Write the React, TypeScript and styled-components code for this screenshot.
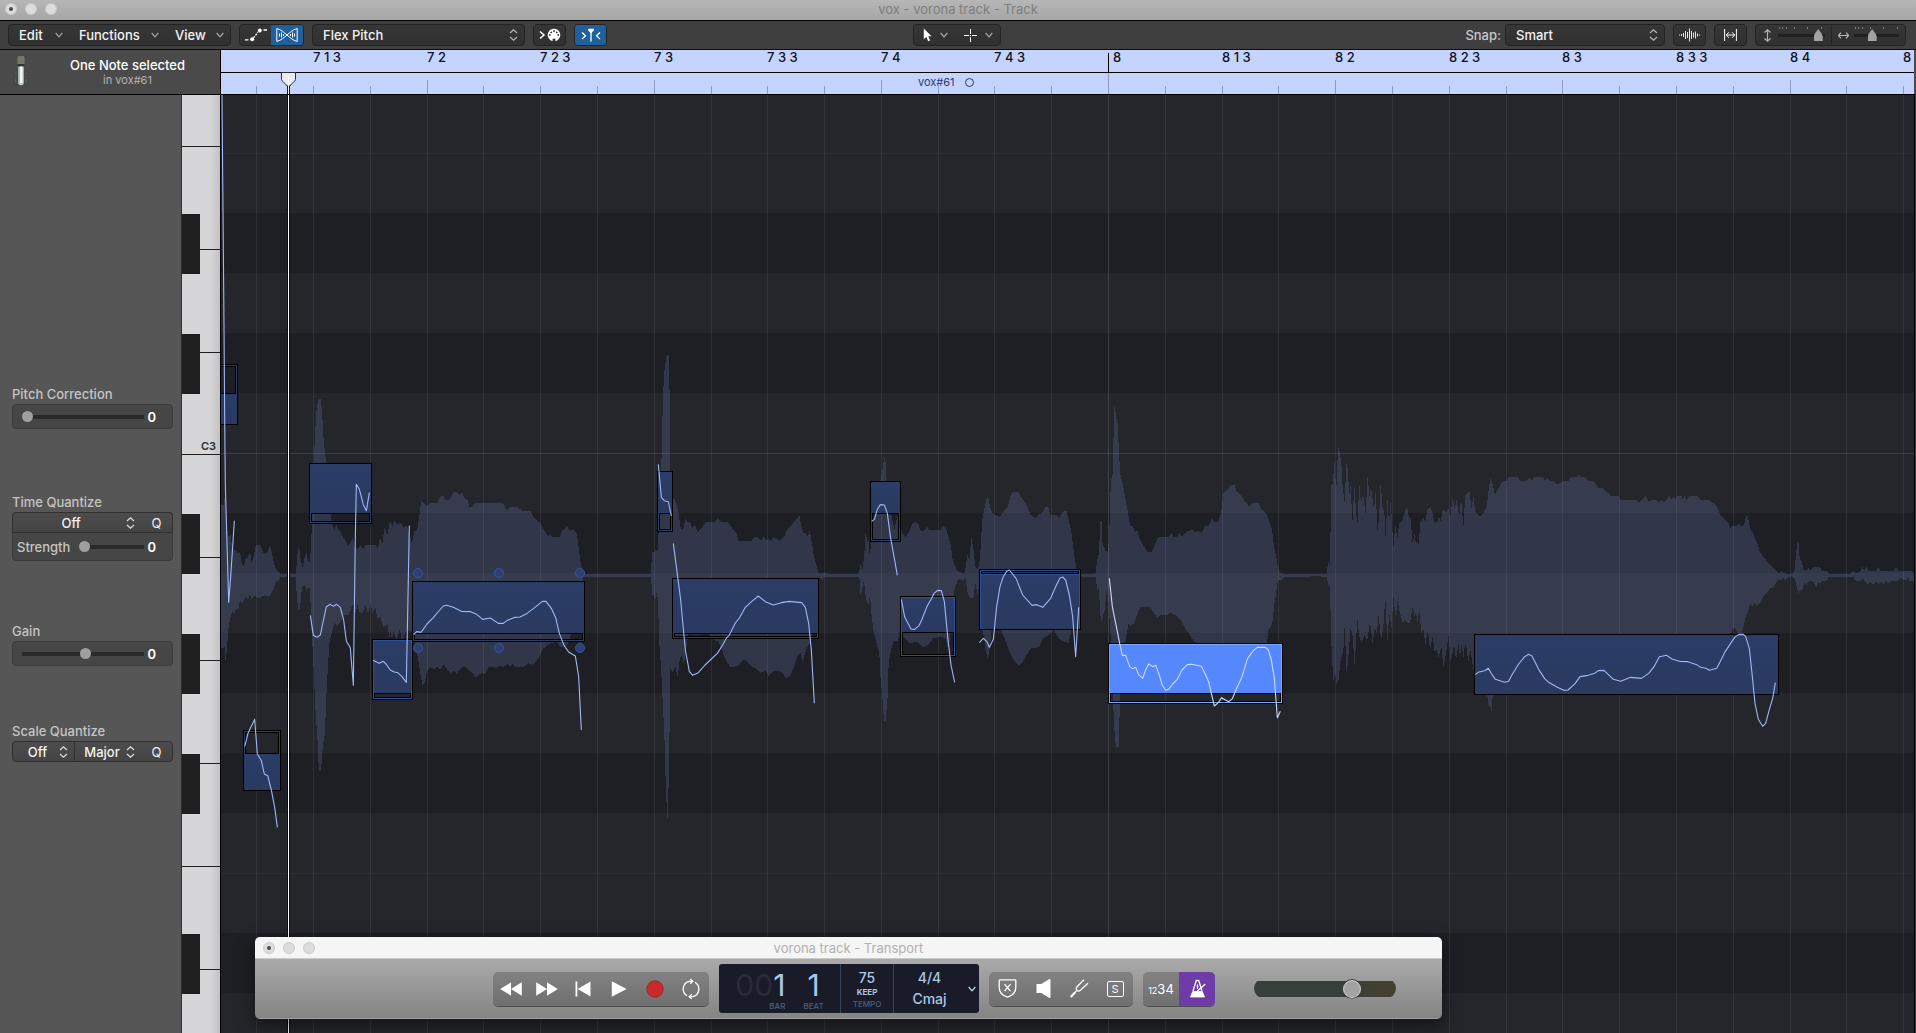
import React from "react";
import styled, { createGlobalStyle, css } from "styled-components";

const GlobalStyle = createGlobalStyle`
  *, *::before, *::after { box-sizing: border-box; }
  html, body { margin: 0; background: #25262b; }
  body { font-family: Inter, "Liberation Sans", sans-serif; font-size: 13px; color: #f2f2f2; }
  button, select, input, output { font: inherit; color: inherit; margin: 0; padding: 0; }
`;

/* ------------------------------------------------------------------ */
/* Timeline data                                                       */
/* ------------------------------------------------------------------ */

/* Horizontal offset of the n-th 1/8 division, from the left of the editor. */
const gridX = (n: number) => Math.round(35.2 + n * 56.79);
const GRID = Array.from({ length: 30 }, (_, n) => gridX(n));

const BEAT_LABELS = ["7 1 3", "7 2", "7 2 3", "7 3", "7 3 3", "7 4", "7 4 3", "8", "8 1 3", "8 2", "8 2 3", "8 3", "8 3 3", "8 4", "8"];

type Lane = { size: number; dark?: boolean; rule?: "strong" | "soft" };
const LANES: Lane[] = [
  { size: 58, rule: "soft" },
  { size: 60 },
  { size: 60, dark: true },
  { size: 60 },
  { size: 60, dark: true },
  { size: 60, rule: "strong" },
  { size: 60 },
  { size: 60, dark: true },
  { size: 60 },
  { size: 60, dark: true },
  { size: 60 },
  { size: 60, dark: true },
  { size: 60, rule: "soft" },
  { size: 60 },
  { size: 60, dark: true },
  { size: 60 },
];

const WHITE_KEYS = [52, 103, 103, 102, 103, 103, 103, 103, 103, 103];
const BLACK_KEYS = [119, 239, 419, 539, 659, 839];

type NoteData = {
  x: number;
  y: number;
  w: number;
  h: number;
  hollow?: number;
  side?: "top" | "bottom";
  edge?: string;
  selected?: boolean;
};
const NOTES: NoteData[] = [
  { x: -20, y: 269, w: 37, h: 61, hollow: 29, side: "top" },
  { x: 22, y: 635, w: 38, h: 61, hollow: 23, side: "top" },
  { x: 88, y: 368, w: 63, h: 61, hollow: 10, side: "bottom" },
  { x: 151, y: 544, w: 41, h: 61, hollow: 6, side: "bottom", edge: "#2c4f9e" },
  { x: 191, y: 486, w: 173, h: 61, hollow: 8, side: "bottom" },
  { x: 436, y: 376, w: 16, h: 61, hollow: 18, side: "bottom" },
  { x: 451, y: 483, w: 147, h: 61, hollow: 5, side: "bottom" },
  { x: 649, y: 386, w: 31, h: 61, hollow: 28, side: "bottom" },
  { x: 679, y: 501, w: 56, h: 61, hollow: 24, side: "bottom", edge: "#2c4f9e" },
  { x: 758, y: 474, w: 102, h: 61, hollow: 4, side: "top", edge: "#2c4f9e" },
  { x: 887, y: 548, w: 175, h: 61, hollow: 10, side: "bottom", selected: true, edge: "#7ba6ff" },
  { x: 1253, y: 539, w: 305, h: 61 },
];

const HANDLES = [
  [197, 478], [278, 478], [359, 478],
  [197, 553], [278, 553], [359, 553],
];

/* Every take is drawn on a grid three times finer than the editor's. */
type Take = { x: number; y: number; wave: string; curves: { d: string; bright?: boolean }[] };
const TAKES: Take[] = [
  {
    x: -1,
    y: 255,
    wave:
      "3,465 12,465 12,445 18,445 18,490 24,560 33,555 36,600 48,600 54,610 60,605 66,645 72,648 78,622 84,625 90,603 95,640 102,615 108,585 120,585 132,612 142,608 148,588 154,600 162,640 170,662 180,672 228,672 232,615 237,585 242,630 248,652 254,622 260,608 264,632 270,636 274,562 277,500 280,400 283,303 288,195 294,150 302,147 306,185 311,270 318,335 324,460 332,495 338,530 344,540 349,525 356,540 362,545 368,560 376,572 385,588 392,575 398,562 404,590 414,598 421,585 430,598 437,585 466,585 473,598 480,562 487,585 493,532 502,556 510,512 518,528 523,512 532,525 541,518 550,532 560,528 566,545 576,580 582,545 592,538 600,480 604,452 614,462 622,470 632,460 650,460 660,440 672,438 676,450 690,448 700,427 712,427 718,437 726,427 734,445 742,448 748,470 758,470 764,460 850,460 860,482 872,472 892,472 908,482 932,484 940,500 952,512 962,520 975,545 985,558 992,552 996,560 1020,560 1026,542 1036,535 1040,528 1048,542 1062,540 1070,550 1076,590 1082,640 1090,672 1200,672 " +
      "1200,681 1090,681 1080,760 1070,830 1055,850 1042,885 1022,892 1010,876 992,880 970,895 958,920 946,938 935,945 925,940 912,950 885,950 878,942 870,950 862,942 850,950 836,948 828,955 820,950 805,952 795,972 785,968 776,975 768,982 758,970 748,962 736,950 728,950 718,960 710,972 702,960 694,972 684,962 672,942 662,958 650,950 642,958 630,950 620,968 614,1000 607,1005 600,965 594,925 585,890 580,850 570,842 558,842 545,880 540,835 530,870 520,845 516,868 510,840 508,868 503,825 490,830 480,800 472,805 466,770 458,790 452,763 444,790 436,762 428,790 418,785 412,762 407,790 400,762 395,770 385,795 370,795 362,815 352,828 343,820 335,850 328,880 322,980 318,1060 315,1150 309,1185 303,1262 297,1265 292,1160 286,1075 282,980 278,900 274,830 270,712 264,715 260,722 254,705 246,712 240,775 235,782 230,735 228,681 182,681 174,695 168,693 160,718 152,735 145,740 134,736 116,745 104,738 94,748 90,730 84,750 78,738 66,762 60,750 55,780 48,775 42,795 38,780 32,800 26,830 22,880 17,938 14,890 10,895 3,895",
    curves: [
      { d: "6,-765 12,-75 14,204 16,405 22,615 26,757 32,680 38,590 43,512" },
      { d: "74,1190 84,1150 104,1108 112,1212 124,1232 133,1272 143,1277 154,1320 164,1372 172,1432" },
      { d: "271,796 280,856 291,862 301,855 319,770 331,763 340,769 350,763 361,772 371,810 379,873 391,894 400,1006 406,560 409,403 418,418 430,464 439,482 448,428" },
      { d: "459,931 478,940 490,934 498,942 511,960 521,965 533,968 546,980 559,997 568,527" },
      { d: "581,854 590,845 603,847 621,822 640,803 654,786 670,768 680,766 700,772 724,784 752,785 770,793 788,808 811,804 835,820 850,820 862,811 885,802 900,801 920,791 945,772 967,754 978,754 994,775 1007,803 1018,850 1032,886 1046,906 1066,918 1076,980 1084,1140" },
    ],
  },
  {
    x: 399,
    y: 245,
    wave:
      "0,702 93,702 96,637 104,635 108,627 112,640 116,575 120,520 123,420 126,290 129,165 133,95 139,50 145,42 148,60 150,400 156,480 163,475 170,495 176,520 182,565 190,567 196,535 202,545 211,548 216,568 220,558 226,558 232,575 242,568 256,547 285,545 293,534 305,545 326,548 340,570 350,580 355,602 395,602 402,592 415,592 422,602 430,592 440,602 446,598 452,602 460,592 472,595 478,602 492,590 502,568 512,558 522,545 530,538 538,525 543,555 550,578 556,578 563,590 569,570 575,605 581,645 588,670 596,700 710,702 717,700 721,670 728,688 734,630 737,572 742,610 745,595 750,655 753,600 760,540 770,500 779,430 786,400 790,370 793,347 797,370 799,440 806,520 815,530 823,568 832,528 840,555 848,580 856,592 866,578 878,550 884,545 893,550 903,575 914,570 922,560 928,570 962,570 970,558 978,565 985,590 992,615 998,660 1006,680 1012,692 1024,698 1034,700 1042,645 1048,660 1054,592 1060,625 1066,680 1074,690 1080,655 1087,535 1092,512 1098,480 1104,468 1110,500 1115,515 1124,525 1140,530 1150,515 1164,498 1172,465 1178,456 1196,456 1206,475 1216,488 1225,508 1232,525 1246,533 1256,525 1270,515 1276,501 1286,503 1290,524 1308,524 1316,533 1322,525 1328,515 1340,513 1346,540 1354,575 1362,640 1370,690 1380,702 " +
      "1380,710 1372,740 1365,830 1355,868 1346,910 1330,903 1320,900 1310,885 1300,868 1286,885 1270,895 1256,922 1232,925 1220,945 1210,962 1196,977 1182,960 1170,940 1158,905 1145,875 1130,850 1115,870 1108,935 1102,956 1096,925 1088,865 1085,800 1078,730 1073,765 1066,730 1060,775 1050,775 1042,755 1037,715 1028,722 1016,715 1004,745 998,800 990,900 984,925 976,895 960,890 940,895 925,915 908,922 890,905 870,910 856,895 848,890 840,870 834,903 820,905 812,935 806,970 802,1090 796,1148 792,1140 787,1070 782,1020 778,940 768,905 760,870 755,830 750,765 745,797 738,778 732,720 728,740 722,767 718,710 612,710 608,722 598,712 590,800 575,900 566,915 558,930 548,965 542,940 532,950 524,975 512,1005 498,1015 488,998 476,992 462,992 445,1008 438,992 422,998 408,985 395,980 380,962 368,960 358,975 345,980 330,980 318,962 308,935 295,905 280,900 266,880 230,885 205,882 198,930 192,975 186,948 180,952 173,1010 166,980 158,998 150,980 148,1250 143,1440 138,1360 133,1180 128,1080 123,980 118,910 114,780 110,755 106,782 102,765 97,765 93,710 0,710",
    curves: [
      { d: "115,373 124,472 133,482 145,485 154,528" },
      { d: "160,610 173,710 182,780 196,930 208,994 218,1006 235,998 255,975 292,940 308,915 318,896 328,885 346,849 358,834 376,802 398,782 415,768 436,785 460,795 484,788 508,784 545,788 556,802 566,850 574,930 583,1090" },
      { d: "755,544 763,538 772,508 781,494 793,495 802,520 812,595 823,655 832,706" },
      { d: "844,778 854,831 873,867 884,868 897,857 905,840 922,797 935,775 942,760 953,751 964,752 973,785 983,890 993,975 1004,1027" },
      { d: "1078,908 1090,895 1100,904 1108,922 1120,898 1130,800 1140,740 1150,710 1160,694 1168,690 1188,715 1208,765 1236,796 1250,794 1268,802 1292,775 1308,738 1320,714 1328,711 1337,720 1348,765 1358,830 1367,950 1376,802" },
    ],
  },
  {
    x: 859,
    y: 285,
    wave:
      "0,582 46,582 51,543 57,520 61,422 65,422 67,488 76,512 84,516 88,455 91,345 94,300 99,280 101,140 104,70 108,110 113,130 118,240 122,290 128,310 135,350 146,410 150,437 158,438 166,458 172,452 178,475 192,500 202,516 215,515 224,495 236,471 266,471 274,459 280,471 290,471 298,459 306,471 314,460 325,452 340,450 346,458 352,452 365,458 375,438 386,437 396,415 403,426 416,424 424,395 430,340 438,330 444,332 450,316 464,316 470,335 478,340 492,360 508,380 516,370 536,370 548,392 562,405 570,430 576,450 582,500 588,525 594,565 600,578 612,582 740,582 745,543 749,555 752,440 754,315 759,310 763,240 766,290 769,330 772,245 776,200 781,225 785,260 788,320 794,370 799,250 803,265 808,345 812,315 817,430 823,315 827,375 832,438 838,310 843,370 849,340 857,402 863,282 868,350 873,320 882,390 887,335 893,458 898,400 902,303 907,380 913,395 917,476 922,352 927,430 932,362 936,425 940,503 946,435 952,475 958,428 966,425 972,402 981,380 987,412 992,415 998,495 1003,458 1007,485 1016,492 1021,428 1030,412 1036,425 1042,388 1052,382 1058,400 1063,425 1072,425 1077,408 1082,425 1088,390 1100,396 1106,385 1111,410 1118,352 1124,388 1130,358 1137,408 1140,395 " +
      "1140,835 1136,788 1128,840 1122,792 1112,850 1106,765 1098,820 1090,860 1084,800 1076,832 1070,810 1064,815 1058,770 1050,810 1044,750 1036,795 1030,745 1024,760 1018,690 1012,730 1008,692 1004,710 998,682 990,728 980,728 974,720 968,728 960,700 953,660 947,710 940,650 935,745 928,700 922,788 916,650 910,740 903,782 896,705 890,760 884,745 878,792 870,725 862,782 854,765 845,788 838,770 832,715 824,858 818,770 812,740 806,820 800,885 794,735 790,815 782,840 776,900 769,912 766,880 761,905 757,850 754,790 750,625 744,610 740,590 704,589 666,591 612,591 602,602 594,600 588,640 582,680 578,720 572,745 566,745 561,790 500,800 350,790 340,782 330,765 318,750 306,725 290,708 270,698 262,705 240,705 232,714 222,700 212,682 180,682 170,708 162,730 150,738 145,732 136,785 125,850 120,960 116,1100 108,1105 103,1045 98,940 94,800 90,740 86,668 80,630 74,690 65,725 60,700 57,620 52,632 47,590 0,590",
    curves: [
      { bright: true, d: "88,595 97,680 109,740 120,795 127,826 137,826 149,860 157,866 167,862 176,884 188,895 197,870 206,852 218,860 227,856 236,880 247,915 257,931 266,928 278,912 292,898 306,870 322,854 335,853 364,859 376,883 386,905 394,940 403,978 415,968 425,953 436,960 447,965 457,956 470,925 485,893 503,835 520,812 532,802 556,802 565,810 574,840 583,895 588,960 592,1013 601,994" },
    ],
  },
  {
    x: 1239,
    y: 345,
    wave:
      "0,215 3,168 10,262 16,165 28,152 35,207 40,168 46,215 60,230 70,220 80,200 86,150 91,115 97,130 105,165 112,150 128,125 140,122 146,111 174,111 180,123 200,123 207,111 216,123 222,111 248,111 255,123 262,115 270,123 282,123 291,134 302,128 312,123 326,122 334,111 352,111 357,104 362,111 376,111 384,123 402,125 414,143 430,145 438,155 446,160 452,168 476,168 482,180 530,180 538,188 550,175 558,168 567,186 575,180 590,180 598,188 606,180 612,188 622,178 628,168 634,178 640,170 646,178 652,168 664,168 668,178 673,168 680,180 688,168 714,168 720,180 748,180 760,190 772,202 780,222 788,232 796,240 806,248 811,266 818,258 830,258 836,250 842,258 852,256 858,228 864,230 870,265 880,280 887,300 893,312 900,338 910,350 922,365 940,382 956,400 964,393 974,400 990,402 1003,395 1008,345 1012,305 1016,308 1019,355 1026,365 1030,390 1040,390 1045,384 1050,390 1062,381 1080,381 1086,393 1102,394 1108,402 1170,402 1178,394 1190,400 1200,395 1207,381 1213,390 1220,381 1226,393 1248,393 1254,381 1262,393 1300,393 1308,381 1316,393 1356,393 1362,400 " +
      "1362,422 1348,422 1344,410 1338,422 1322,415 1315,422 1290,425 1284,432 1278,422 1270,432 1262,425 1256,434 1248,425 1240,434 1232,425 1224,434 1208,415 1204,422 1188,422 1180,411 1140,410 1106,411 1098,422 1085,422 1080,432 1076,425 1069,442 1060,425 1048,422 1040,434 1032,428 1026,455 1020,448 1016,462 1010,440 1005,418 995,408 986,412 976,420 968,412 964,422 958,416 948,428 940,442 930,445 920,460 910,468 902,488 890,498 884,488 878,498 870,492 864,515 856,535 850,565 840,590 832,578 822,560 815,578 806,582 780,600 102,700 98,765 95,815 92,802 86,800 82,765 70,700 40,692 36,660 31,630 25,668 20,625 15,612 10,655 5,612 0,650",
    curves: [
      { d: "46,704 54,697 74,692 85,685 95,702 106,718 134,727 146,724 156,704 176,672 194,650 206,643 216,648 236,688 254,716 266,727 292,742 312,751 324,750 345,731 360,710 384,706 404,700 414,692 432,691 460,718 482,724 512,712 544,715 566,700 582,680 598,650 620,646 636,657 658,664 684,665 710,674 722,682 738,685 748,691 770,685 782,662 796,634 824,592 836,584 850,583 857,590 868,625 876,700 885,790 895,838 908,859 917,850 928,808 938,775 946,728" },
    ],
  },
];

/* ------------------------------------------------------------------ */
/* Shell                                                               */
/* ------------------------------------------------------------------ */

const Shell = styled.div`
  position: relative;
  display: flex;
  flex-direction: column;
  height: 100vh;
  min-width: 1200px;
  overflow: hidden;
  background: #3f3f3f;
`;

const TitleBar = styled.header<{ $light?: boolean }>`
  display: grid;
  grid-template-columns: 1fr auto 1fr;
  align-items: center;
  flex: none;
  padding: 0 5px;
  ${(p) =>
    p.$light
      ? css`
          height: 22px;
          padding: 0 8px;
          background: #f5f5f5;
          border-bottom: 1px solid #c9cbc9;
          color: #b1b1b1;
        `
      : css`
          height: 21px;
          padding-bottom: 2px;
          background: linear-gradient(#b6b6b6, #a6a6a6);
          border-bottom: 1px solid #080808;
          color: #7e7e7e;
        `}
`;

const WindowTitle = styled.h1`
  margin: 0;
  font-size: 13px;
  line-height: 16px;
  font-weight: 400;
`;

const Lights = styled.div`
  display: flex;
  gap: 8px;
`;

const Light = styled.button<{ $dot?: boolean }>`
  display: grid;
  place-items: center;
  width: 12px;
  height: 12px;
  border: 1px solid #cacaca;
  border-radius: 50%;
  background: #dcdcdc;
  &::after {
    content: "";
    width: 4px;
    height: 4px;
    border-radius: 50%;
    background: ${(p) => (p.$dot ? "#4c4c4c" : "transparent")};
  }
`;

const Toolbar = styled.div`
  display: grid;
  grid-template-columns: 1fr auto 1fr;
  align-items: center;
  flex: none;
  height: 29px;
  padding: 0 10px 0 8px;
  border-bottom: 1px solid #0c0c0c;
  background: #3f3f3f;
`;

const ToolSet = styled.div<{ $end?: boolean }>`
  display: flex;
  align-items: center;
  gap: 8px;
  justify-content: ${(p) => (p.$end ? "flex-end" : "flex-start")};
`;

const Group = styled.div`
  display: flex;
  height: 22px;
  border: 1px solid #232323;
  border-radius: 4px;
  background: linear-gradient(#363636, #303030);
  overflow: hidden;
  & > * + * { border-left: 1px solid #262626; }
`;

const MenuButton = styled.button<{ $w: number }>`
  display: flex;
  align-items: center;
  justify-content: space-between;
  width: ${(p) => p.$w}px;
  padding: 0 6px 0 10px;
  border: 0;
  background: none;
  font-weight: 500;
`;

const IconButton = styled.button<{ $w: number; $on?: boolean }>`
  display: flex;
  align-items: center;
  justify-content: center;
  gap: 8px;
  width: ${(p) => p.$w}px;
  border: 0;
  background: ${(p) => (p.$on ? "#20609d" : "none")};
`;

const SelectBox = styled.span<{ $w?: number }>`
  display: grid;
  grid-template-columns: 1fr auto;
  align-items: center;
  ${(p) => (p.$w ? `width: ${p.$w}px;` : "flex: 1;")}
  & > select { grid-area: 1 / 1 / 2 / 3; }
  & > svg { grid-area: 1 / 2; margin-right: 6px; pointer-events: none; }
`;

const Select = styled.select<{ $center?: boolean }>`
  appearance: none;
  width: 100%;
  height: 20px;
  border: 0;
  background: none;
  font-weight: 500;
  padding: ${(p) => (p.$center ? "0 12px 0 0" : "0 10px")};
  text-align-last: ${(p) => (p.$center ? "center" : "left")};
`;

const SnapLabel = styled.label`
  margin-right: -4px;
  font-weight: 500;
  color: #c8c8c8;
`;

const ZoomCell = styled.div<{ $w: number }>`
  display: flex;
  align-items: center;
  gap: 5px;
  width: ${(p) => p.$w}px;
  padding: 0 6px;
`;

const ZoomTrack = styled.span`
  display: grid;
  flex: 1;
  & > * { grid-area: 1 / 1; }
`;

const ZoomRange = styled.input`
  appearance: none;
  width: 100%;
  height: 20px;
  background: linear-gradient(#202020, #202020) center / 100% 3px no-repeat;
  &::-webkit-slider-thumb {
    appearance: none;
    width: 9px;
    height: 12px;
    background: #a2a2a2;
    clip-path: polygon(50% 0, 85% 35%, 100% 60%, 100% 100%, 0 100%, 0 60%, 15% 35%);
  }
`;

/* ------------------------------------------------------------------ */
/* Header and ruler                                                    */
/* ------------------------------------------------------------------ */

const HeadRow = styled.div`
  display: flex;
  flex: none;
  height: 45px;
  border-bottom: 1px solid #000;
  background: #4a4a4a;
`;

const Selection = styled.div`
  display: flex;
  align-items: center;
  width: 221px;
  padding-left: 14px;
  border-right: 1px solid #000;
`;

const SelectionText = styled.div`
  flex: 1;
  padding-right: 8px;
  text-align: center;
  margin-left: 15px;
`;

const SelectionTitle = styled.div`
  font-size: 13px;
  line-height: 15px;
  font-weight: 500;
  color: #fff;
`;

const SelectionSub = styled.div`
  font-size: 11px;
  line-height: 14px;
  color: #b4b4b4;
`;

const Ruler = styled.div`
  position: relative;
  flex: 1;
  min-width: 0;
  overflow: hidden;
  margin-right: 2px;
  background: #c5d4fe;
  color: #10131c;
`;

const BeatRow = styled.div`
  display: flex;
  height: 23px;
  border-bottom: 1px solid #000;
`;

const Beat = styled.span<{ $w: number; $bar?: boolean }>`
  flex: 0 1 ${(p) => p.$w}px;
  height: 19px;
  line-height: 15px;
  font-size: 13px;
  font-weight: 500;
  white-space: nowrap;
  ${(p) => p.$bar && "align-self: flex-end; padding-left: 4px; border-left: 1px solid #000; line-height: 9px;"}
  &:not(:last-child) { flex-shrink: 0; }
`;

const TickRow = styled.div`
  display: flex;
  align-items: flex-end;
  height: 21px;
`;

const Tick = styled.span<{ $w: number; $h: number }>`
  flex: none;
  width: ${(p) => p.$w}px;
  height: ${(p) => p.$h}px;
  border-left: ${(p) => (p.$h ? "1px solid #8f9cc2" : "0")};
`;

const RegionName = styled.div`
  position: absolute;
  left: 697px;
  top: 24px;
  display: flex;
  align-items: center;
  gap: 10px;
  font-size: 11px;
  line-height: 16px;
  color: #263a78;
  &::after {
    content: "";
    width: 9px;
    height: 9px;
    border: 1px solid #263a78;
    border-radius: 50%;
  }
`;

const PlayheadGrip = styled.svg`
  position: absolute;
  left: 60px;
  top: 22px;
`;

/* ------------------------------------------------------------------ */
/* Inspector                                                           */
/* ------------------------------------------------------------------ */

const Body = styled.main`
  display: flex;
  flex: 1;
  min-height: 0;
`;

const Inspector = styled.aside`
  flex: none;
  width: 182px;
  padding: 291px 8px 0 12px;
  background: #565656;
  border-right: 1px solid #2f2f2f;
`;

const Section = styled.section<{ $gap?: number }>`
  margin-top: ${(p) => p.$gap ?? 0}px;
`;

const SectionTitle = styled.h2`
  margin: 0 0 2px;
  font-size: 13px;
  line-height: 16px;
  font-weight: 500;
  color: #c4c4c4;
`;

const Well = styled.div`
  border: 1px solid #3b3b3b;
  border-radius: 4px;
  background: #464646;
`;

const SliderRow = styled.div<{ $h?: number }>`
  display: flex;
  align-items: center;
  height: ${(p) => p.$h ?? 23}px;
  padding: 0 16px 0 9px;
`;

const SliderLabel = styled.label`
  width: 62px;
  margin-left: -5px;
  color: #c4c4c4;
  font-weight: 500;
`;

const SliderValue = styled.output`
  width: 12px;
  text-align: right;
  font-weight: 600;
  color: #fff;
`;

const Range = styled.input`
  appearance: none;
  flex: 1;
  min-width: 0;
  height: 12px;
  background: linear-gradient(#2a2a2a, #2a2a2a) center / 100% 4px no-repeat;
  &::-webkit-slider-thumb {
    appearance: none;
    width: 11px;
    height: 11px;
    border-radius: 50%;
    background: #9f9f9f;
  }
`;

const SelectRow = styled.div<{ $join?: boolean }>`
  display: flex;
  height: 21px;
  border: 1px solid #303030;
  border-radius: 4px;
  background: linear-gradient(#4c4c4c, #444);
  ${(p) => p.$join && "margin: -1px -1px 0; border-bottom-left-radius: 0; border-bottom-right-radius: 0;"}
  & > * + * { border-left: 1px solid #303030; }
`;

const QButton = styled.button`
  width: 31px;
  border: 0;
  background: none;
`;

/* ------------------------------------------------------------------ */
/* Keyboard                                                            */
/* ------------------------------------------------------------------ */

const Keyboard = styled.div`
  position: relative;
  flex: none;
  width: 39px;
  overflow: hidden;
  border-right: 1px solid #000;
  background: #d4d4d6;
`;

const WhiteKey = styled.div<{ $h: number }>`
  display: flex;
  align-items: flex-end;
  justify-content: flex-end;
  height: ${(p) => p.$h}px;
  padding-right: 4px;
  border-bottom: 1px solid #1e1e1e;
  background: linear-gradient(90deg, #d6d6d8 75%, #c2c2c4);
  font-size: 11px;
  line-height: 16px;
  font-weight: 600;
  color: #2b2b2b;
`;

const BlackKey = styled.div<{ $y: number }>`
  position: absolute;
  left: 0;
  top: ${(p) => p.$y}px;
  width: 18px;
  height: 60px;
  background: #1f1f1f;
`;

/* ------------------------------------------------------------------ */
/* Editor canvas                                                       */
/* ------------------------------------------------------------------ */

const Canvas = styled.div`
  position: relative;
  flex: 1;
  min-width: 0;
  overflow: hidden;
  margin-right: 1px;
  border-right: 1px solid #000;
  background: #25262b;
`;

const LaneStrip = styled.div<{ $h: number; $dark?: boolean; $rule?: "strong" | "soft" }>`
  height: ${(p) => p.$h}px;
  background: ${(p) => (p.$dark ? "#1e1f24" : "#25262b")};
  box-shadow: ${(p) => (p.$rule ? `0 1px ${p.$rule === "strong" ? "#3e3f43" : "#2c2d32"}` : "none")};
  position: relative;
  z-index: ${(p) => (p.$rule ? 1 : 0)};
`;

const Layer = styled.svg`
  position: absolute;
  left: 0;
  top: 0;
  width: 1693px;
  height: 938px;
  z-index: 2;
  pointer-events: none;
`;

const NoteBox = styled.div<{ $x: number; $y: number; $w: number; $h: number; $side?: "top" | "bottom" }>`
  position: absolute;
  z-index: 2;
  left: ${(p) => p.$x}px;
  top: ${(p) => p.$y}px;
  width: ${(p) => p.$w}px;
  height: ${(p) => p.$h}px;
  display: flex;
  flex-direction: ${(p) => (p.$side === "top" ? "column-reverse" : "column")};
  border: 1px solid #000;
`;

const NoteFill = styled.div<{ $selected?: boolean; $edge?: string }>`
  flex: 1;
  background: ${(p) => (p.$selected ? "#5587fd" : "linear-gradient(#2b3d66, #2a3a60)")};
  ${(p) => p.$edge && `box-shadow: inset 0 1px ${p.$edge}, inset 1px 0 ${p.$edge}, inset -1px 0 ${p.$edge};`}
`;

const NoteHollow = styled.div<{ $h: number; $edge: string; $side?: "top" | "bottom" }>`
  height: ${(p) => p.$h}px;
  border: 1px solid ${(p) => p.$edge};
  border-${(p) => (p.$side === "top" ? "bottom" : "top")}-width: 0;
  box-shadow: inset 0 0 0 1px #000;
`;

const Handle = styled.span<{ $x: number; $y: number }>`
  position: absolute;
  z-index: 3;
  left: ${(p) => p.$x - 5}px;
  top: ${(p) => p.$y - 5}px;
  width: 10px;
  height: 10px;
  border: 1px solid #3355a8;
  border-radius: 50%;
  background: #2d406f;
`;

const Playhead = styled.div`
  position: absolute;
  z-index: 4;
  left: 66px;
  top: 0;
  bottom: 0;
  width: 3px;
  background: #fff;
  border: solid #0c0c0f;
  border-width: 0 1px;
`;

/* ------------------------------------------------------------------ */
/* Transport                                                           */
/* ------------------------------------------------------------------ */

const Transport = styled.section`
  position: absolute;
  z-index: 10;
  left: 255px;
  bottom: 14px;
  width: 1187px;
  border-radius: 5px;
  overflow: hidden;
  box-shadow: 0 6px 18px rgba(0, 0, 0, 0.5);
`;

const TransportBody = styled.div`
  display: flex;
  align-items: center;
  gap: 10px;
  height: 60px;
  padding-left: 238px;
  background: linear-gradient(#aaa, #848484);
  border-bottom: 1px solid #a0a0a0;
`;

const PadGroup = styled.div`
  display: flex;
  height: 34px;
  border-radius: 5px;
  overflow: hidden;
  background: linear-gradient(#828282, #6f6f6f);
  box-shadow: 0 1px #4f4f4f;
  & > * + * { border-left: 1px solid #666; }
`;

const Pad = styled.button<{ $on?: boolean }>`
  display: grid;
  place-items: center;
  width: 36px;
  border: 0;
  background: ${(p) => (p.$on ? "#6e3ca6" : "none")};
  color: #fff;
`;

const Lcd = styled.div`
  display: flex;
  width: 260px;
  height: 49px;
  border-radius: 3px;
  background: #191b28;
  color: #a9c8e6;
  & > * + * { border-left: 1px solid #304761; }
`;

const LcdCell = styled.div<{ $w: number; $gap?: number }>`
  display: flex;
  justify-content: center;
  gap: ${(p) => p.$gap ?? 0}px;
  width: ${(p) => p.$w}px;
`;

const LcdStack = styled.div<{ $end?: boolean }>`
  display: flex;
  flex-direction: column;
  align-items: ${(p) => (p.$end ? "flex-end" : "center")};
`;

const LcdDigits = styled.span`
  font-size: 30px;
  line-height: 32px;
  padding-top: 5px;
  & > i { font-style: normal; color: #282b38; }
`;

const LcdText = styled.span<{ $pad?: number }>`
  padding-top: ${(p) => p.$pad ?? 0}px;
  font-size: 14px;
  line-height: 16px;
  font-weight: 500;
`;

const LcdKeep = styled.span`
  font-size: 8px;
  line-height: 13px;
  font-weight: 700;
`;

const LcdCaption = styled.span`
  font-size: 8px;
  line-height: 10px;
  font-weight: 500;
  color: #48617e;
`;

const LcdMore = styled.button`
  display: grid;
  place-items: center;
  flex: 1;
  border-width: 0;
  background: none;
`;

const CountIn = styled.span`
  font-size: 13px;
  & > small { font-size: 9px; }
`;

const Volume = styled.input`
  appearance: none;
  width: 142px;
  height: 20px;
  margin-left: 29px;
  background: linear-gradient(90deg, #383f3b 60%, #45402f) center / 100% 16px no-repeat;
  clip-path: inset(0 round 10px);
  &::-webkit-slider-thumb {
    appearance: none;
    width: 18px;
    height: 18px;
    border: 1px solid #d0d0d0;
    border-radius: 50%;
    background: #a3a3a3;
    box-shadow: 0 0 0 1px #3a3a3a;
  }
`;

/* ------------------------------------------------------------------ */
/* Icons                                                               */
/* ------------------------------------------------------------------ */

const Chevron = ({ color = "#a8a8a8" }: { color?: string }) => (
  <svg width="8" height="6" viewBox="0 0 8 6" fill="none" stroke={color} strokeWidth="1.2" aria-hidden="true">
    <path d="M.7 1 4 4.8 7.3 1" />
  </svg>
);

const UpDown = ({ color = "#b4b4b4" }: { color?: string }) => (
  <svg width="9" height="12" viewBox="0 0 9 12" fill="none" stroke={color} strokeWidth="1.2" aria-hidden="true">
    <path d="M1 4 4.5.8 8 4M1 8l3.5 3.2L8 8" />
  </svg>
);

const AutomationIcon = () => (
  <svg width="22" height="14" viewBox="0 0 22 14" fill="#fff" stroke="#fff" strokeWidth="1.3" aria-hidden="true">
    <path d="M0 11.8h3.500M18.500 2h3.500" />
    <path d="M8.500 9.800l4.500-5.600" strokeDasharray="2 1.200" />
    <circle cx="7.2" cy="11.2" r="2" stroke="none" />
    <circle cx="14.8" cy="2.600" r="2" stroke="none" />
  </svg>
);

const FlexIcon = () => (
  <svg width="22" height="14" viewBox="0 0 22 14" fill="none" stroke="#fff" strokeWidth="1" aria-hidden="true">
    <path d="M.8.6C5 1.4 8 4.5 11 7c3 2.5 6 5.6 10.200 6.400V.6C17 1.400 14 4.500 11 7 8 9.500 5 12.600.8 13.400z" />
    <path d="M3.500 5.500v3M5.500 4.500v5M7.500 6v2M14.500 6v2M16.500 4.500v5M18.500 5.500v3" />
  </svg>
);

const MidiOutIcon = () => (
  <svg width="22" height="14" viewBox="0 0 22 14" aria-hidden="true">
    <path d="M1 3.500 5 7 1 10.500" fill="none" stroke="#fff" strokeWidth="1.500" />
    <path d="M15 .8a6.200 6.200 0 0 0-4.700 10.300c1 1.100 1.800 2 3.200 2h3c1.400 0 2.200-.9 3.200-2A6.200 6.200 0 0 0 15 .8z" fill="#fff" />
    <g fill="#333">
      <circle cx="10.800" cy="7" r=".9" /><circle cx="12.200" cy="4.300" r=".9" /><circle cx="15" cy="3" r=".9" />
      <circle cx="17.800" cy="4.300" r=".9" /><circle cx="19.200" cy="7" r=".9" /><path d="M13.600 10.800h2.800v2.400h-2.800z" />
    </g>
  </svg>
);

const CatchIcon = () => (
  <svg width="20" height="14" viewBox="0 0 20 14" fill="none" stroke="#fff" strokeWidth="1.300" aria-hidden="true">
    <path d="M1 4.500 4.500 7.800 1 11M19 4.500 15.500 7.800 19 11M10 4v9.500" />
    <path d="M7.200.8h5.600v1.400L10.600 5H9.400L7.200 2.200z" fill="#fff" stroke="none" />
  </svg>
);

const PointerIcon = () => (
  <svg width="9" height="14" viewBox="0 0 9 14" fill="#fff" aria-hidden="true">
    <path d="M.8.6v10.600l2.500-2.300 1.900 4.300 1.900-.8-1.900-4.200h3.300z" />
  </svg>
);

const MarqueeIcon = () => (
  <svg width="13" height="13" viewBox="0 0 13 13" stroke="#fff" aria-hidden="true">
    <path d="M6.500 0v5M6.500 8v5M0 6.500h5M8 6.500h5M6.500 6v1" />
  </svg>
);

const WaveIcon = () => (
  <svg width="21" height="14" viewBox="0 0 21 14" stroke="#e4e4e4" aria-hidden="true">
    <path d="M.5 6.500v1M2.500 6v2M4.500 5v4M6.500 3v8M8.500 4v6M10.500 .5v13M12.500 3v8M14.500 4.500v5M16.500 3.500v7M18.500 5.500v3M20.500 6.500v1" />
  </svg>
);

const FitIcon = () => (
  <svg width="13" height="14" viewBox="0 0 13 14" fill="none" stroke="#fff" aria-hidden="true">
    <path d="M.6 1v12M12.400 1v12M2.500 7h8M5 4.200 2.200 7 5 9.800M8 4.200 10.800 7 8 9.800" />
  </svg>
);

const ArrowsIcon = ({ vertical }: { vertical?: boolean }) => (
  <svg width="11" height="13" viewBox="0 0 11 13" fill="none" stroke="#b4b4b4" strokeWidth="1.200" aria-hidden="true">
    {vertical ? (
      <path d="M5.500 1v11M2.500 3.500 5.500.8l3 2.700M2.500 9.500l3 2.700 3-2.700" />
    ) : (
      <path d="M0 6.500h11M3 3.700.4 6.500 3 9.300M8 3.700l2.600 2.800L8 9.300" />
    )}
  </svg>
);

const ScaleMarks = () => (
  <svg width="44" height="20" viewBox="0 0 44 20" stroke="#7c7c7c" aria-hidden="true">
    <path d="M1.500 2v2M4.500 2v2M8.500 2v2M16.500 2v2M29.500 2v2M43.500 2v2" />
  </svg>
);

const MicIcon = () => (
  <svg width="14" height="32" viewBox="0 0 14 32" aria-hidden="true">
    <path d="M1 16h2v3H1zM11 16h2v3h-2zM.8 22l2 1v3l-2 1.500zM13.200 22l-2 1v3l2 1.500zM2.500 28l1.500 2M11.500 28 10 30" fill="#5c645e" stroke="#38403a" strokeWidth=".6" />
    <path d="M4.200 0h5.600l.8 1.500V8H3.400V1.500z" fill="#77756a" />
    <path d="M3.400 8h7.200l-.8 3H4.200z" fill="#343434" />
    <path d="M4.200 10.500h5.600V27l-.8 2H5l-.8-2z" fill="#bcc4be" />
    <path d="M6.200 10.500h2.200V27H6.200z" fill="#f8faf8" />
    <path d="M4.800 29h4.400L8.300 31.500H5.700z" fill="#4f5751" />
  </svg>
);

const RewindIcon = () => (
  <svg width="22" height="14" viewBox="0 0 22 14" fill="#fff" aria-hidden="true">
    <path d="M11 .3v13.400L.2 7zM21.800.3v13.400L11 7z" />
  </svg>
);
const ForwardIcon = () => (
  <svg width="22" height="14" viewBox="0 0 22 14" fill="#fff" aria-hidden="true">
    <path d="M.2.3v13.400L11 7zM11 .3v13.400L21.800 7z" />
  </svg>
);
const ToStartIcon = () => (
  <svg width="16" height="16" viewBox="0 0 16 16" fill="#fff" aria-hidden="true">
    <path d="M.5.500h1.800v15H.5zM15.500.5v15L2.600 8z" />
  </svg>
);
const PlayIcon = () => (
  <svg width="16" height="16" viewBox="0 0 16 16" fill="#fff" aria-hidden="true">
    <path d="M.8.200v15.600L15.600 8z" />
  </svg>
);
const RecordIcon = () => (
  <svg width="18" height="18" viewBox="0 0 18 18" aria-hidden="true">
    <circle cx="9" cy="9" r="8.200" fill="#c92a2c" stroke="#8e2323" strokeWidth=".8" />
  </svg>
);
const CycleIcon = () => (
  <svg width="20" height="20" viewBox="0 0 20 20" fill="none" stroke="#fff" strokeWidth="1.300" aria-hidden="true">
    <path d="M6 16.800A8 8 0 0 1 8 2.300h3.500" />
    <path d="M14 3.200A8 8 0 0 1 12 17.700H8.500" />
    <path d="M9.200 0 11.800 2.300 9.200 4.800M10.800 15.200 8.200 17.700l2.600 2.300" />
  </svg>
);
const ReplaceIcon = () => (
  <svg width="19" height="19" viewBox="0 0 19 19" fill="none" stroke="#fff" strokeWidth="1.300" aria-hidden="true">
    <path d="M2 .8h15a.8.800 0 0 1 .8.800v7c0 4.500-3.500 8-8.300 9.500C4.700 16.600 1.200 13.100 1.200 8.600v-7A.8.800 0 0 1 2 .8zM6.500 5.200l6 7M12.500 5.200l-6 7" />
  </svg>
);
const SpeakerIcon = () => (
  <svg width="15" height="19" viewBox="0 0 15 19" fill="#fff" aria-hidden="true">
    <path d="M.5 5h4.800L13 .3c.8-.5 1.500 0 1.500.8v16.800c0 .8-.7 1.300-1.500.8L5.300 14H.5z" />
  </svg>
);
const ForkIcon = () => (
  <svg width="19" height="19" viewBox="0 0 19 19" fill="none" stroke="#fff" strokeWidth="1.300" aria-hidden="true">
    <path d="M14 .8 7 7.800c-1.200 1.300-.9 2.700 0 3.500.9.900 2.200 1.100 3.400 0L18 4.300M6.700 11.600.8 17.800" />
    <path d="m5.200 13.200-4.400 4.800" strokeWidth="2" />
  </svg>
);
const SoloBox = styled.span`
  display: grid;
  place-items: center;
  width: 17px;
  height: 16px;
  border: 1px solid #fff;
  border-radius: 2px;
  font-size: 11px;
  line-height: 14px;
`;
const MetronomeIcon = () => (
  <svg width="17" height="19" viewBox="0 0 17 19" aria-hidden="true">
    <path d="M4 12 7.300 1.500h2.400L13 12" fill="none" stroke="#fff" strokeWidth="1.300" />
    <path d="M3.700 12.500h9.600L15.500 18h-14z" fill="#fff" stroke="#fff" strokeWidth=".8" />
    <path d="M8 12.500 16.300 5" stroke="#fff" strokeWidth="1.300" />
    <path d="M8.500 5.500v4.500" stroke="#fff" strokeWidth="1.300" />
  </svg>
);

/* ------------------------------------------------------------------ */
/* Parts                                                               */
/* ------------------------------------------------------------------ */

const TrafficLights = () => (
  <Lights>
    <Light $dot aria-label="Close" />
    <Light aria-label="Minimize" />
    <Light aria-label="Zoom" />
  </Lights>
);

type PopupProps = { id: string; label: string; value: string; width: number; center?: boolean; light?: boolean };
const Popup = ({ id, label, value, width, center, light }: PopupProps) => (
  <SelectBox $w={width}>
    <Select id={id} aria-label={label} $center={center} defaultValue={value}>
      <option>{value}</option>
    </Select>
    <UpDown color={light ? "#e0e0e0" : undefined} />
  </SelectBox>
);

const TopTools = () => (
  <Toolbar>
    <ToolSet>
      <Group>
        <MenuButton $w={60}>Edit<Chevron /></MenuButton>
        <MenuButton $w={96}>Functions<Chevron /></MenuButton>
        <MenuButton $w={65}>View<Chevron /></MenuButton>
      </Group>
      <Group>
        <IconButton $w={31} aria-label="Show automation"><AutomationIcon /></IconButton>
        <IconButton $w={32} $on aria-label="Show flex"><FlexIcon /></IconButton>
      </Group>
      <Group>
        <Popup id="flex-mode" label="Flex mode" value="Flex Pitch" width={211} />
      </Group>
      <Group>
        <IconButton $w={31} aria-label="MIDI out"><MidiOutIcon /></IconButton>
      </Group>
      <Group>
        <IconButton $w={31} $on aria-label="Catch playhead"><CatchIcon /></IconButton>
      </Group>
    </ToolSet>
    <Group>
      <IconButton $w={43} aria-label="Pointer tool"><PointerIcon /><Chevron /></IconButton>
      <IconButton $w={43} aria-label="Marquee tool"><MarqueeIcon /><Chevron /></IconButton>
    </Group>
    <ToolSet $end>
      <SnapLabel htmlFor="snap">Snap:</SnapLabel>
      <Group>
        <Popup id="snap" label="Snap" value="Smart" width={158} />
      </Group>
      <Group>
        <IconButton $w={31} aria-label="Waveform zoom"><WaveIcon /></IconButton>
      </Group>
      <Group>
        <IconButton $w={31} aria-label="Zoom to fit"><FitIcon /></IconButton>
      </Group>
      <Group>
        <ZoomCell $w={75}>
          <ArrowsIcon vertical />
          <ZoomTrack><ScaleMarks /><ZoomRange type="range" aria-label="Vertical zoom" defaultValue={94} /></ZoomTrack>
        </ZoomCell>
        <ZoomCell $w={74}>
          <ArrowsIcon />
          <ZoomTrack><ScaleMarks /><ZoomRange type="range" aria-label="Horizontal zoom" defaultValue={38} /></ZoomTrack>
        </ZoomCell>
      </Group>
    </ToolSet>
  </Toolbar>
);

const BAR_INDEX = 15;
const TimeRuler = () => (
  <Ruler>
    <BeatRow>
      <Beat as="i" $w={gridX(1)} />
      {BEAT_LABELS.map((text, i) => (
        <Beat key={i} $w={gridX(i * 2 + 3) - gridX(i * 2 + 1)} $bar={i * 2 + 1 === BAR_INDEX}>{text}</Beat>
      ))}
    </BeatRow>
    <TickRow>
      <Tick $w={GRID[0]} $h={0} />
      {GRID.map((x, n) => (
        <Tick key={n} $w={gridX(n + 1) - x} $h={n === BAR_INDEX ? 21 : n % 4 === 3 ? 14 : 8} />
      ))}
    </TickRow>
    <RegionName>vox#61</RegionName>
    <PlayheadGrip width="15" height="22" viewBox="0 0 15 22" aria-hidden="true">
      <path d="M.5.500h14v7c0 2-4 3.500-5.500 6.500H6C4.500 11 .5 9.500.5 7.500z" fill="#e9ebf0" stroke="#2c2e36" />
      <path d="M7 4h1v18H7z" fill="#fff" />
      <path d="M6.500 14v8M8.500 14v8" stroke="#1a1b20" />
    </PlayheadGrip>
  </Ruler>
);

const Controls = () => (
  <Inspector>
    <Section>
      <SectionTitle>Pitch Correction</SectionTitle>
      <Well>
        <SliderRow>
          <Range type="range" aria-label="Pitch Correction" defaultValue={0} />
          <SliderValue>0</SliderValue>
        </SliderRow>
      </Well>
    </Section>
    <Section $gap={65}>
      <SectionTitle>Time Quantize</SectionTitle>
      <Well>
        <SelectRow $join>
          <Popup id="time-q" label="Time Quantize" value="Off" width={129} center light />
          <QButton>Q</QButton>
        </SelectRow>
        <SliderRow $h={27}>
          <SliderLabel htmlFor="strength">Strength</SliderLabel>
          <Range id="strength" type="range" defaultValue={0} />
          <SliderValue>0</SliderValue>
        </SliderRow>
      </Well>
    </Section>
    <Section $gap={62}>
      <SectionTitle>Gain</SectionTitle>
      <Well>
        <SliderRow>
          <Range type="range" aria-label="Gain" defaultValue={52} />
          <SliderValue>0</SliderValue>
        </SliderRow>
      </Well>
    </Section>
    <Section $gap={57}>
      <SectionTitle>Scale Quantize</SectionTitle>
      <SelectRow>
        <Popup id="scale-root" label="Scale root" value="Off" width={61} center light />
        <Popup id="scale-kind" label="Scale" value="Major" width={67} center light />
        <QButton>Q</QButton>
      </SelectRow>
    </Section>
  </Inspector>
);

const Piano = () => (
  <Keyboard>
    {WHITE_KEYS.map((h, i) => <WhiteKey key={i} $h={h}>{i === 3 ? "C3" : null}</WhiteKey>)}
    {BLACK_KEYS.map((y) => <BlackKey key={y} $y={y} />)}
  </Keyboard>
);

const PitchEditor = () => (
  <Canvas>
    {LANES.map((l, i) => <LaneStrip key={i} $h={l.size} $dark={l.dark} $rule={l.rule} />)}
    <Layer viewBox="0 0 1693 938" aria-hidden="true">
      {TAKES.map((t) => (
        <polygon
          key={t.x}
          points={t.wave}
          transform={`translate(${t.x} ${t.y}) scale(${1 / 3})`}
          fill="rgba(97,114,160,.3)"
          shapeRendering="crispEdges"
        />
      ))}
      {GRID.map((x, n) => (
        <rect key={n} x={x} y="0" width="1" height="938" fill="#fff" fillOpacity={n === BAR_INDEX ? 0.13 : 0.065} />
      ))}
    </Layer>
    {NOTES.map((n) => (
      <NoteBox key={n.x} $x={n.x} $y={n.y} $w={n.w} $h={n.h} $side={n.side}>
        <NoteFill $selected={n.selected} $edge={n.edge} />
        {n.hollow ? <NoteHollow $h={n.hollow} $side={n.side} $edge={n.edge ?? "#2c3d68"} /> : null}
      </NoteBox>
    ))}
    {HANDLES.map(([x, y]) => <Handle key={`${x}-${y}`} $x={x} $y={y} />)}
    <Layer viewBox="0 0 1693 938" aria-hidden="true">
      {TAKES.map((t) => (
        <g key={t.x} transform={`translate(${t.x} ${t.y}) scale(${1 / 3})`} fill="none" strokeLinejoin="round">
          {t.curves.map((c) => (
            <polyline key={c.d} points={c.d} stroke={c.bright ? "#cbdaff" : "#9fb8f5"} strokeWidth="3.3" />
          ))}
        </g>
      ))}
    </Layer>
    <Playhead />
  </Canvas>
);

const TransportWindow = () => (
  <Transport>
    <TitleBar $light>
      <TrafficLights />
      <WindowTitle as="h2">vorona track - Transport</WindowTitle>
    </TitleBar>
    <TransportBody>
      <PadGroup>
        <Pad aria-label="Rewind"><RewindIcon /></Pad>
        <Pad aria-label="Forward"><ForwardIcon /></Pad>
        <Pad aria-label="Go to beginning"><ToStartIcon /></Pad>
        <Pad aria-label="Play"><PlayIcon /></Pad>
        <Pad aria-label="Record"><RecordIcon /></Pad>
        <Pad aria-label="Cycle"><CycleIcon /></Pad>
      </PadGroup>
      <Lcd>
        <LcdCell $w={121} $gap={18}>
          <LcdStack $end>
            <LcdDigits><i>00</i>1</LcdDigits>
            <LcdCaption>BAR</LcdCaption>
          </LcdStack>
          <LcdStack>
            <LcdDigits>1</LcdDigits>
            <LcdCaption>BEAT</LcdCaption>
          </LcdStack>
        </LcdCell>
        <LcdCell $w={53}>
          <LcdStack>
            <LcdText $pad={6}>75</LcdText>
            <LcdKeep>KEEP</LcdKeep>
            <LcdCaption>TEMPO</LcdCaption>
          </LcdStack>
        </LcdCell>
        <LcdCell $w={72}>
          <LcdStack>
            <LcdText $pad={6}>4/4</LcdText>
            <LcdText $pad={5}>Cmaj</LcdText>
          </LcdStack>
        </LcdCell>
        <LcdMore aria-label="Display mode"><Chevron color="#c4dcf2" /></LcdMore>
      </Lcd>
      <PadGroup>
        <Pad aria-label="Replace"><ReplaceIcon /></Pad>
        <Pad aria-label="Low latency"><SpeakerIcon /></Pad>
        <Pad aria-label="Tuner"><ForkIcon /></Pad>
        <Pad aria-label="Solo"><SoloBox>S</SoloBox></Pad>
      </PadGroup>
      <PadGroup>
        <Pad aria-label="Count in"><CountIn><small>12</small>34</CountIn></Pad>
        <Pad $on aria-label="Metronome"><MetronomeIcon /></Pad>
      </PadGroup>
      <Volume type="range" aria-label="Master volume" defaultValue={72} />
    </TransportBody>
  </Transport>
);

export default function App() {
  return (
    <Shell>
      <GlobalStyle />
      <TitleBar>
        <TrafficLights />
        <WindowTitle>vox - vorona track - Track</WindowTitle>
      </TitleBar>
      <TopTools />
      <HeadRow>
        <Selection>
          <MicIcon />
          <SelectionText>
            <SelectionTitle>One Note selected</SelectionTitle>
            <SelectionSub>in vox#61</SelectionSub>
          </SelectionText>
        </Selection>
        <TimeRuler />
      </HeadRow>
      <Body>
        <Controls />
        <Piano />
        <PitchEditor />
      </Body>
      <TransportWindow />
    </Shell>
  );
}
